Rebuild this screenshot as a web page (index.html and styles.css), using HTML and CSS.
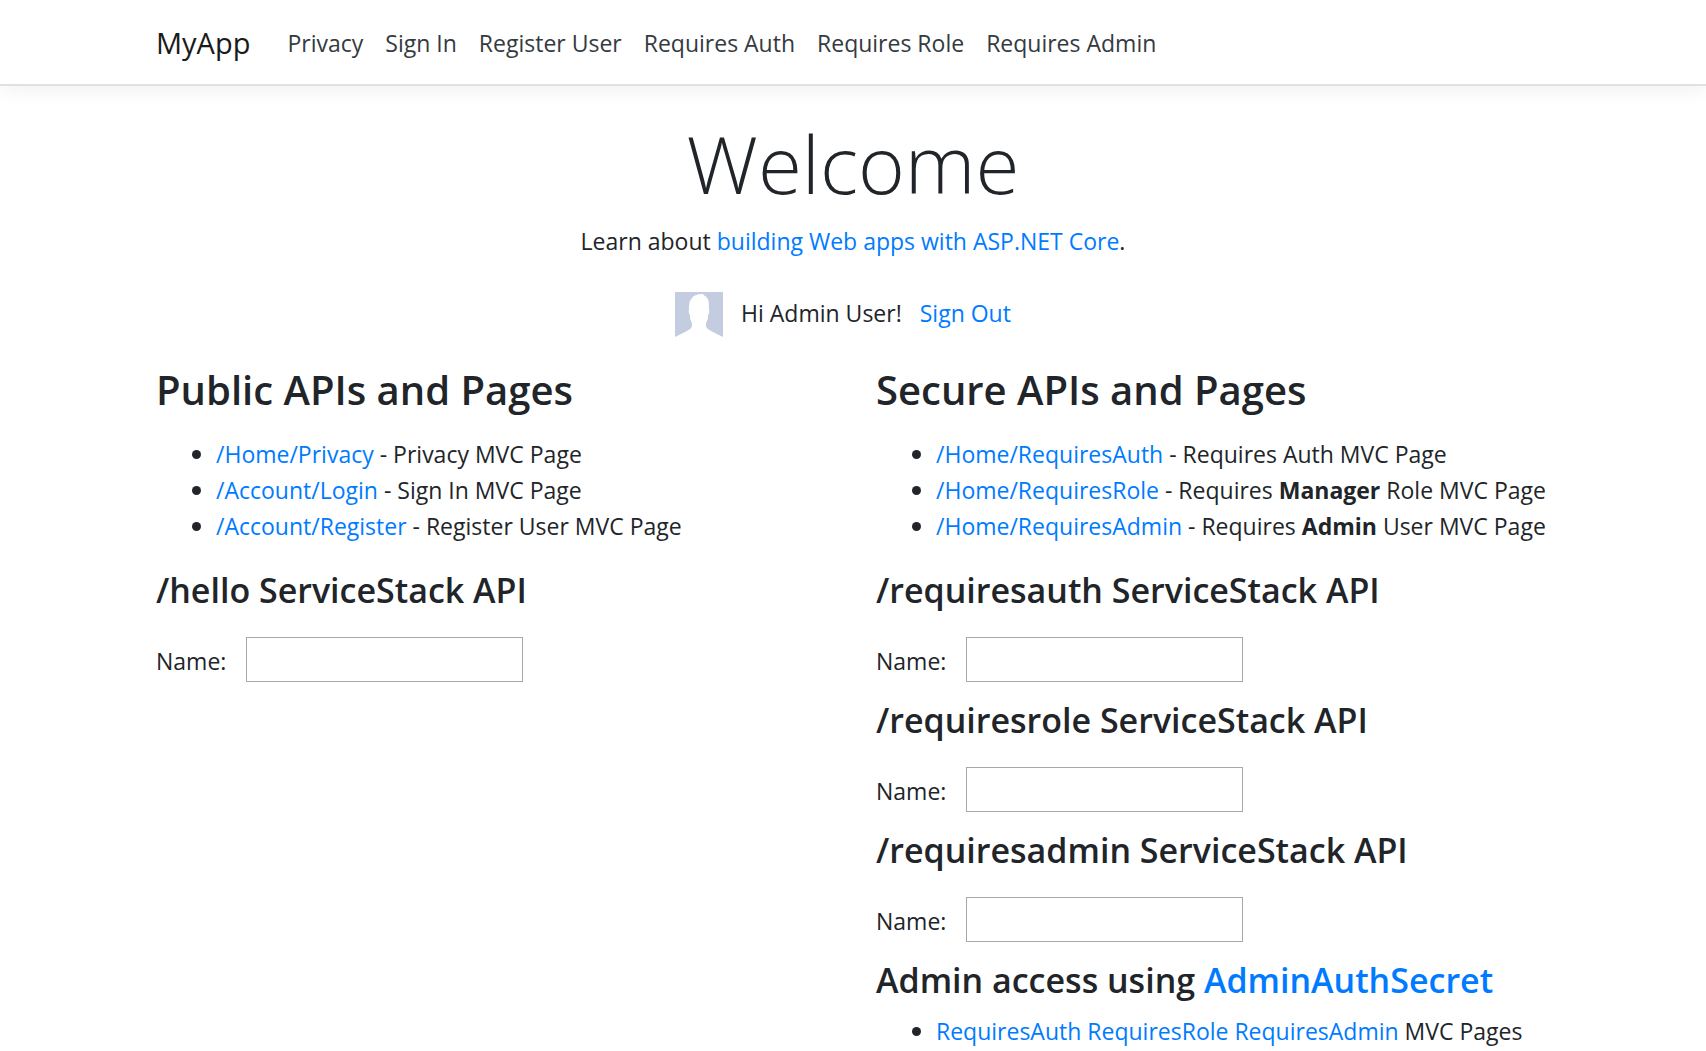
FILE: index.html
```html
<!DOCTYPE html>
<html lang="en">
<head>
<meta charset="utf-8">
<meta name="viewport" content="width=device-width, initial-scale=1">
<title>Home Page - MyApp</title>
<link rel="stylesheet" href="styles.css">
</head>
<body>
<header class="navbar">
  <nav class="container navbar-row">
    <a class="navbar-brand" href="#">MyApp</a>
    <ul class="navbar-nav">
      <li><a class="nav-link" href="#">Privacy</a></li>
      <li><a class="nav-link" href="#">Sign In</a></li>
      <li><a class="nav-link" href="#">Register User</a></li>
      <li><a class="nav-link" href="#">Requires Auth</a></li>
      <li><a class="nav-link" href="#">Requires Role</a></li>
      <li><a class="nav-link" href="#">Requires Admin</a></li>
    </ul>
  </nav>
</header>
<main class="container">
  <section class="intro">
    <h1 class="display">Welcome</h1>
    <p class="lead">Learn about <a href="#">building Web apps with ASP.NET Core</a>.</p>
    <div class="user">
      <svg class="avatar" viewBox="0 0 48 48" aria-hidden="true">
        <path fill="#c4cce0" d="M0 0h48v45l-12-6c-3-2-5-3-5-5 0-2 0-3 1-5 1-2 1-3 1-6 1-1 2-4 1-5 0-6 0-10-2-12-1-2-3-2-4-4-5 0-9 1-11 4-3 3-3 7-3 12-1 1 0 4 1 5 0 3 0 4 1 6s1 3 1 5c0 2-2 3-5 5L0 45z"/>
      </svg>
      <span>Hi Admin User!</span>
      <a href="#">Sign Out</a>
    </div>
  </section>
  <div class="columns">
    <section>
      <h3 class="title">Public APIs and Pages</h3>
      <ul class="links">
        <li><a href="#">/Home/Privacy</a> - Privacy MVC Page</li>
        <li><a href="#">/Account/Login</a> - Sign In MVC Page</li>
        <li><a href="#">/Account/Register</a> - Register User MVC Page</li>
      </ul>
      <h4 class="subtitle">/hello ServiceStack API</h4>
      <div class="field"><label for="hello">Name:</label><input id="hello" type="text"></div>
    </section>
    <section>
      <h3 class="title">Secure APIs and Pages</h3>
      <ul class="links">
        <li><a href="#">/Home/RequiresAuth</a> - Requires Auth MVC Page</li>
        <li><a href="#">/Home/RequiresRole</a> - Requires <b>Manager</b> Role MVC Page</li>
        <li><a href="#">/Home/RequiresAdmin</a> - Requires <b>Admin</b> User MVC Page</li>
      </ul>
      <h4 class="subtitle">/requiresauth ServiceStack API</h4>
      <div class="field"><label for="auth">Name:</label><input id="auth" type="text"></div>
      <h4 class="subtitle">/requiresrole ServiceStack API</h4>
      <div class="field"><label for="role">Name:</label><input id="role" type="text"></div>
      <h4 class="subtitle">/requiresadmin ServiceStack API</h4>
      <div class="field"><label for="admin">Name:</label><input id="admin" type="text"></div>
      <h4 class="subtitle">Admin access using <a href="#">AdminAuthSecret</a></h4>
      <ul class="links compact">
        <li><a href="#">RequiresAuth</a> <a href="#">RequiresRole</a> <a href="#">RequiresAdmin</a> MVC Pages</li>
      </ul>
    </section>
  </div>
</main>
</body>
</html>
```
FILE: styles.css
```css
* { box-sizing: border-box; }

body {
  margin: 0;
  background: #fff;
  color: #212529;
  font: 400 23px/36px "Segoe UI", "Open Sans", "Noto Sans", sans-serif;
}

a { color: #007bff; text-decoration: none; }
a:hover { text-decoration: underline; }
h1, h3, h4, p, ul { margin: 0; }

.container {
  width: 100%;
  max-width: 1440px;
  margin: 0 auto;
  padding: 0 23px;
}

.navbar {
  padding: 13px 0 11px;
  border-bottom: 2px solid #dee2e6;
  box-shadow: 0 4px 18px rgba(0, 0, 0, .06);
}

.navbar-row {
  display: flex;
  flex-wrap: wrap;
  align-items: center;
  min-height: 60px;
}

.navbar-brand {
  margin-right: 26px;
  color: #1a1a1a;
  font-size: 29px;
}

.navbar-nav {
  display: flex;
  flex-wrap: wrap;
  padding: 0;
  list-style: none;
}

.nav-link { display: block; padding: 0 11px; color: #343a40; }

.intro { padding-top: 27px; text-align: center; }

.display { font-size: 80px; font-weight: 300; line-height: 100px; }

.lead { margin-top: 10px; }

.user {
  display: flex;
  justify-content: center;
  align-items: flex-start;
  gap: 18px;
  padding: 33px 20px 0 0;
  line-height: 42px;
}

.avatar { width: 48px; height: 48px; }

.columns { display: grid; grid-template-columns: 1fr 1fr; column-gap: 46px; }

.title {
  padding-top: 24px;
  font-size: 40px;
  font-weight: 600;
  line-height: 52px;
}

.links { margin: 20px 0 24px; padding-left: 60px; list-style: none; }
.links.compact { margin-top: 11px; }

.links li::before {
  content: "";
  display: inline-block;
  width: 9px;
  height: 9px;
  margin: 0 15px 0 -24px;
  border-radius: 50%;
  background: #212529;
  vertical-align: 4px;
}

.subtitle { font-size: 34px; font-weight: 600; line-height: 44px; }

.field {
  display: flex;
  align-items: center;
  margin: 25px 0 16px;
}

.field label { min-width: 90px; padding-top: 3px; }

.field input {
  width: 277px;
  height: 45px;
  padding: 3px;
  border: 1px solid #a9a9a9;
  font: inherit;
}
```
